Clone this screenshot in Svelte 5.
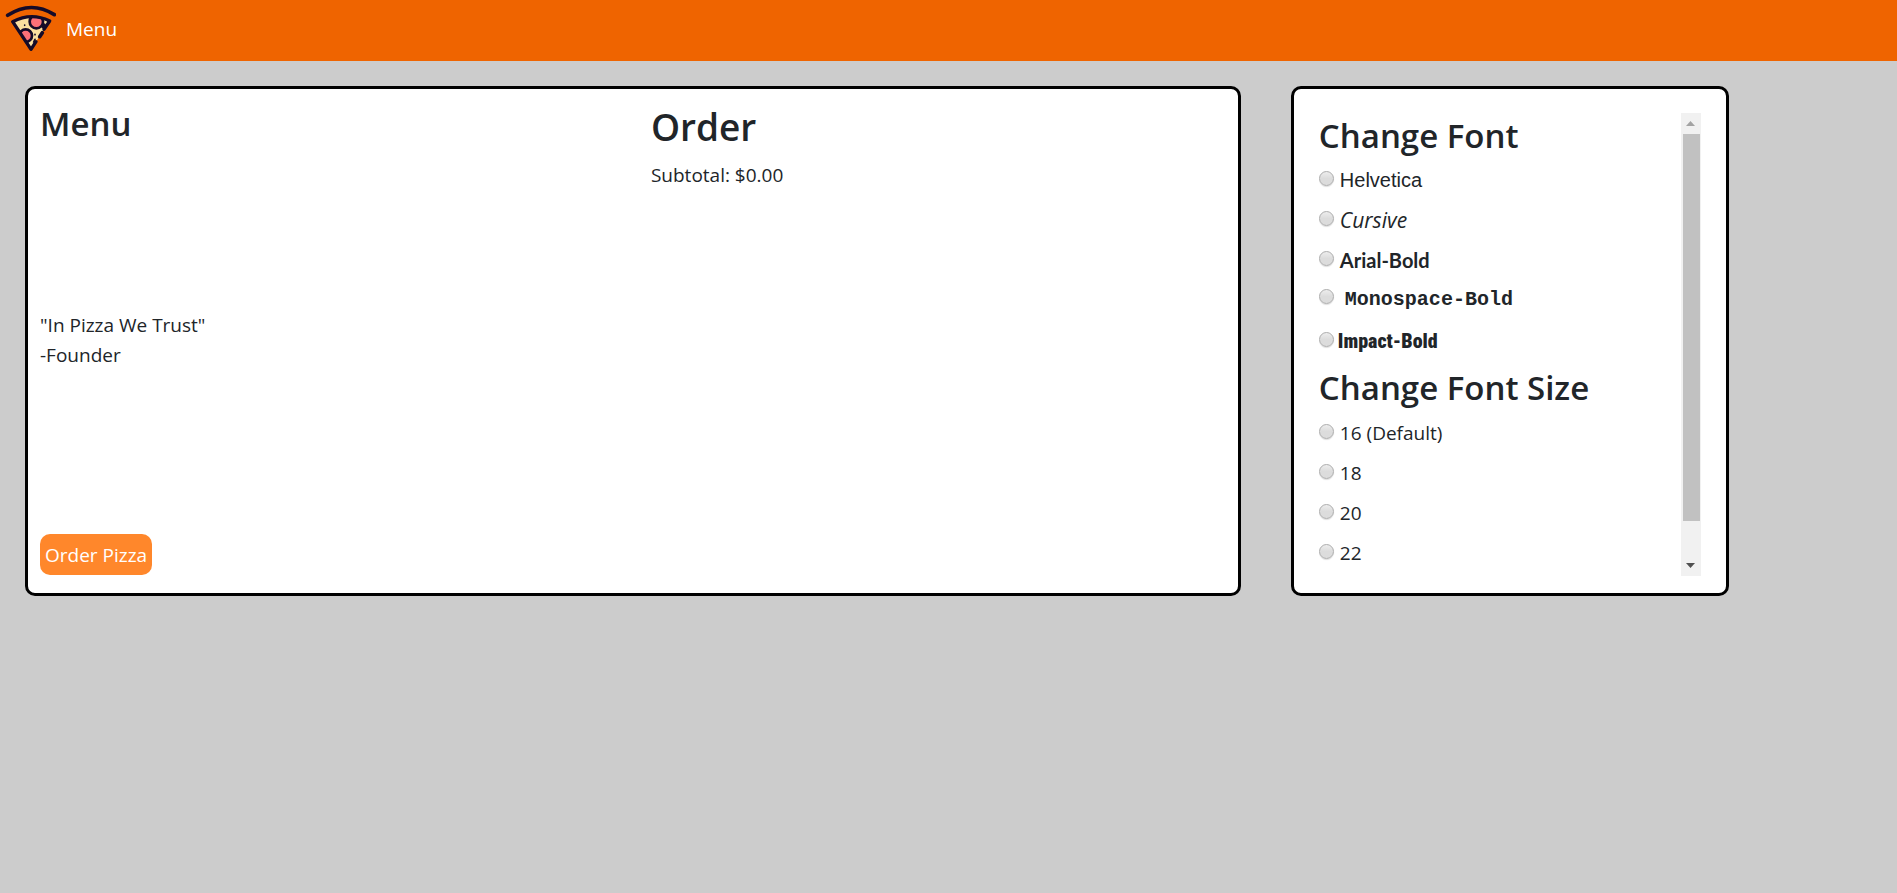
<script>
  const fonts = [
    { id: 'helvetica', label: 'Helvetica' },
    { id: 'cursive', label: 'Cursive' },
    { id: 'arial', label: 'Arial-Bold' },
    { id: 'mono', label: 'Monospace-Bold' },
    { id: 'impact', label: 'Impact-Bold' }
  ];
  const sizes = ['16 (Default)', '18', '20', '22'];
  let scroller;
  const scroll = (dy) => scroller.scrollBy({ top: dy });
</script>

<header class="bar">
  <svg class="logo" viewBox="0 0 168 168" aria-hidden="true">
    <clipPath id="slice"><path d="M38 66 Q94 34 150 64 L93 148 Z" /></clipPath>
    <g clip-path="url(#slice)">
      <path d="M38 66 Q94 34 150 64 L93 148 Z" fill="#fbe0a0" />
      <circle cx="109" cy="65" r="20" fill="#fb7078" stroke="#150b28" stroke-width="8" />
      <circle cx="77" cy="107" r="19" fill="#fb7078" stroke="#150b28" stroke-width="8" />
    </g>
    <path d="M23 46 Q93 0 163 44" fill="none" stroke="#150b28" stroke-width="11" stroke-linecap="round" />
    <path d="M132 88 L149 63 Q94 36 38 65 L93 148 L108 125" fill="none" stroke="#150b28" stroke-width="10" stroke-linecap="round" stroke-linejoin="round" />
    <path d="M127 98 L119 110" stroke="#150b28" stroke-width="11" stroke-linecap="round" />
    <path d="M133 74 L129 82" stroke="#150b28" stroke-width="8" stroke-linecap="round" />
    <path d="M74 75 V76 M105 103 V104 M105 118 L101 126" stroke="#150b28" stroke-width="5" stroke-linecap="round" />
  </svg>
  <a href="#menu">Menu</a>
</header>

<main>
  <section class="panel order-panel" id="menu">
    <div class="menu">
      <h2>Menu</h2>
      <p>"In Pizza We Trust"<br />-Founder</p>
      <button class="order" type="button">Order Pizza</button>
    </div>
    <div>
      <h1>Order</h1>
      <p>Subtotal: $0.00</p>
    </div>
  </section>

  <aside class="panel settings">
    <div class="options" bind:this={scroller}>
      <h2 id="font-title">Change Font</h2>
      <div role="radiogroup" aria-labelledby="font-title">
        {#each fonts as font}
          <label class={font.id}>
            <input type="radio" name="font" value={font.id} /><span>{font.label}</span>
          </label>
        {/each}
      </div>
      <h2 id="size-title">Change Font Size</h2>
      <div role="radiogroup" aria-labelledby="size-title">
        {#each sizes as size}
          <label>
            <input type="radio" name="size" value={size} /><span>{size}</span>
          </label>
        {/each}
      </div>
    </div>
    <div class="track">
      <button type="button" aria-label="Scroll up" onclick={() => scroll(-40)}>
        <svg viewBox="0 0 9 5"><path d="M0 5 L4.500 0 L9 5 Z" fill="#a3a3a3" /></svg>
      </button>
      <div class="thumb"></div>
      <button type="button" aria-label="Scroll down" onclick={() => scroll(40)}>
        <svg viewBox="0 0 9 5"><path d="M0 0 L9 0 L4.500 5 Z" fill="#505050" /></svg>
      </button>
    </div>
  </aside>
</main>

<style>
  :global(body) {
    background: #ccc;
    color: #212529;
    font: 19px/30px "Segoe UI", "Open Sans", "Noto Sans", sans-serif;
  }
  .bar {
    box-sizing: border-box;
    display: flex;
    align-items: center;
    gap: 10px;
    height: 61px;
    padding-bottom: 3px;
    background: #ef6400;
  }
  .logo {
    align-self: flex-start;
    width: 56px;
    height: 56px;
  }
  .bar a {
    color: #fff;
    text-decoration: none;
  }
  main {
    display: flex;
    gap: 50px;
    padding: 25px 0 25px 25px;
  }
  .panel {
    box-sizing: border-box;
    border: 3px solid #000;
    border-radius: 10px;
    background: #fff;
  }
  .order-panel {
    flex: 0 0 64.95%;
    display: grid;
    grid-template-columns: 1fr 1fr;
    gap: 24px;
    padding: 14px 0 18px 12px;
  }
  .settings {
    flex: 0 0 23.4%;
    display: flex;
    padding: 24px 25px 17px;
  }
  .menu {
    display: flex;
    flex-direction: column;
    justify-content: space-between;
    align-items: flex-start;
  }
  h1, h2, p {
    margin: 0;
  }
  h1, h2 {
    font-weight: 600;
  }
  h2 {
    font-size: 33px;
    line-height: 42px;
  }
  h1 {
    margin-bottom: 9px;
    font-size: 37px;
    line-height: 48px;
  }
  .order {
    height: 41px;
    padding: 0 5px;
    border: 0;
    border-radius: 10px;
    background: #ff872b;
    color: #fff;
    font: inherit;
  }
  .options {
    flex: 1;
    height: 463px;
    overflow-y: auto;
    scrollbar-width: none;
  }
  .options h2 {
    padding: 2px 0 8px;
  }
  .options div + h2 {
    padding: 1px 0 9px;
  }
  label {
    display: flex;
    align-items: center;
    gap: 6px;
    height: 30px;
    margin-bottom: 10px;
  }
  input {
    appearance: none;
    box-sizing: border-box;
    width: 15px;
    height: 15px;
    margin: 0 0 3px;
    border: 1px solid #acacac;
    border-radius: 50%;
    background: linear-gradient(#ededed, #dcdcdc 50%);
    box-shadow: 0 1px 1px #ddd;
  }
  .helvetica {
    font-family: "Liberation Sans", Helvetica, sans-serif;
    font-size: 20px;
  }
  .cursive {
    font-family: "Comic Sans MS", "Open Sans", cursive;
    font-size: 21px;
    font-style: italic;
  }
  .arial {
    margin-bottom: 8px;
    font-family: "Trebuchet MS", Lato, sans-serif;
    font-size: 20px;
    font-weight: 700;
  }
  .mono {
    gap: 11px;
    margin-bottom: 13px;
    font-family: "Liberation Mono", monospace;
    font-size: 20px;
    font-weight: 700;
  }
  .mono span {
    padding-top: 3px;
  }
  .impact {
    gap: 4px;
    font-family: Impact, "Liberation Sans Narrow", "Roboto Condensed", sans-serif;
    font-size: 20px;
    font-weight: 900;
  }
  .track {
    display: flex;
    flex-direction: column;
    width: 20px;
    background: #f1f1f1;
  }
  .track button {
    display: flex;
    align-items: center;
    justify-content: center;
    height: 21px;
    padding: 0;
    border: 0;
    background: none;
  }
  .track button:last-child {
    margin-top: auto;
  }
  .track svg {
    width: 9px;
    height: 5px;
  }
  .thumb {
    height: 387px;
    margin: 0 1px 0 2px;
    background: #c1c1c1;
  }
</style>
